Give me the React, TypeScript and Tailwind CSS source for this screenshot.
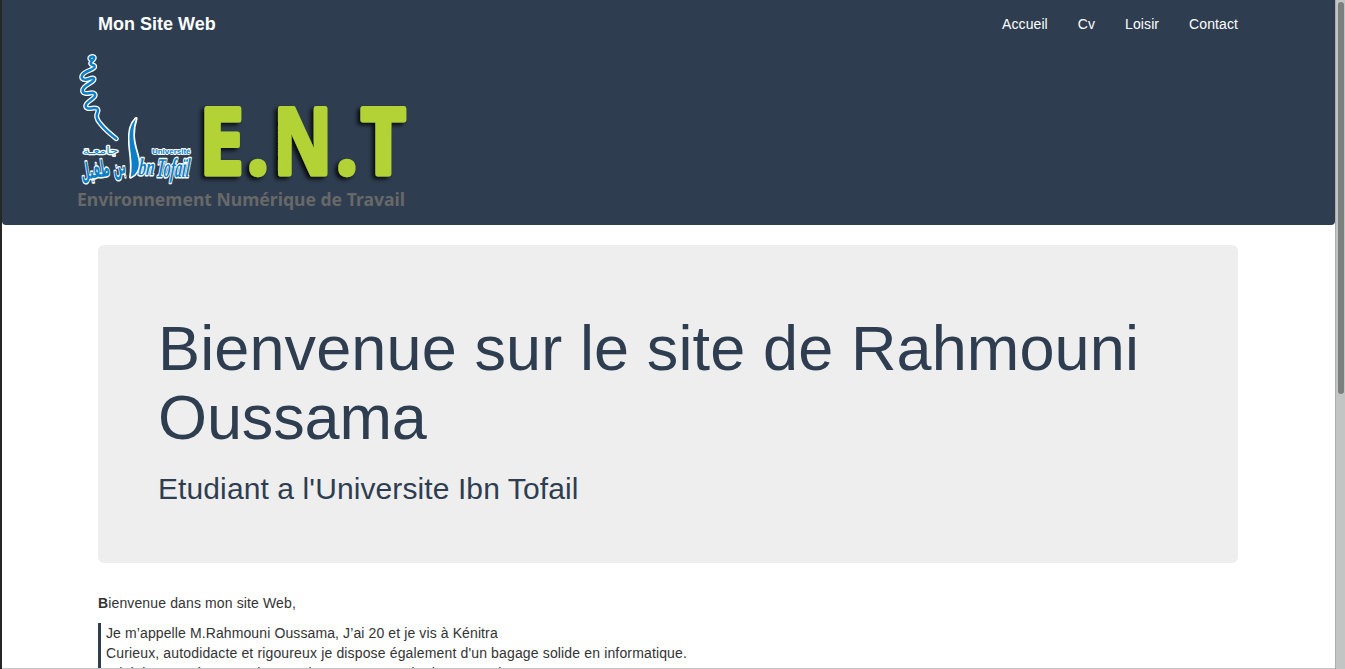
const nav = ['Accueil', 'Cv', 'Loisir', 'Contact'];

const swirl =
  'M62 44 C54 38 66 32 72 36 C77 42 60 50 62 56 C64 62 75 58 74 66 C71 76 44 76 36 92 C31 104 46 106 56 102 C66 98 76 97 71 106 C64 116 42 120 38 134 C36 148 52 146 62 144 C73 142 79 148 73 156 C65 166 48 170 47 183 C48 194 62 190 72 189 C86 188 86 196 82 204 C77 214 82 226 91 236 C106 255 121 267 139 281';
const blade =
  'M198 221 C181 237 177 263 179 292 C180 326 190 355 182 396 C198 389 209 371 206 350 C204 329 190 301 190 271 C190 249 193 235 198 221 Z';

function Calligraphy() {
  return (
    <g fill="none" strokeLinecap="round" strokeLinejoin="round" transform="translate(70 45) scale(.33333)">
      <g filter="url(#glow)">
        <path d={swirl} stroke="#fff" strokeWidth="15" />
        <path d={blade} fill="#fff" stroke="#fff" strokeWidth="10" />
      </g>
      <path d={swirl} stroke="#0b7fc7" strokeWidth="7.5" />
      <path d={blade} fill="#0b7fc7" />
    </g>
  );
}

function Logo() {
  return (
    <svg className="block h-[170px] w-[350px]" viewBox="70 45 350 170" role="img" aria-label="ENT Université Ibn Tofail">
      <defs>
        <filter id="glow" x="-20%" y="-20%" width="140%" height="140%">
          <feGaussianBlur stdDeviation="1.2" />
        </filter>
        <filter id="shade" x="-20%" y="-20%" width="140%" height="140%">
          <feDropShadow dx="-3" dy="2.5" stdDeviation="2" floodColor="#000" floodOpacity="0.85" />
        </filter>
      </defs>
      <Calligraphy />
      <g fill="#0b7fc7" stroke="#fff" strokeWidth="3" strokeLinejoin="round" paintOrder="stroke">
        <g fontFamily="'DejaVu Sans', sans-serif">
          <text x="83" y="154" fontSize="10" strokeWidth="2.4" textLength="35" lengthAdjust="spacingAndGlyphs">جامعـة</text>
          <text transform="translate(82 180) rotate(-9)" fontSize="23" fontWeight="700" textLength="45" lengthAdjust="spacingAndGlyphs">بن طفيل</text>
        </g>
        <g fontFamily="'Liberation Serif', serif" fontStyle="italic" fontWeight="700">
          <text transform="translate(138 175) skewX(-6)" fontSize="24" textLength="16" lengthAdjust="spacingAndGlyphs">bn</text>
          <text transform="translate(156 177) skewX(-6)" fontSize="27" textLength="33" lengthAdjust="spacingAndGlyphs">Tofaïl</text>
        </g>
        <text x="152" y="153.5" fontFamily="'Liberation Sans', sans-serif" fontWeight="700" fontSize="8" strokeWidth="1.8" textLength="38.5" lengthAdjust="spacingAndGlyphs">Université</text>
      </g>
      <g filter="url(#shade)" fill="#b2d235" stroke="#b2d235" strokeWidth="5" strokeLinejoin="round" fontFamily="'Open Sans', sans-serif" fontWeight="700" fontSize="91">
        <text transform="translate(199.5 173.5) scale(.87 1)">E</text>
        <text transform="translate(247 174) scale(.84 .93)">.</text>
        <text transform="translate(273.5 173.5) scale(.79 1)">N</text>
        <text transform="translate(336 174) scale(.84 .93)">.</text>
        <text transform="translate(361 173.5) scale(.85 1)">T</text>
      </g>
      <text x="77" y="206" fill="#686868" fontFamily="'Noto Sans', sans-serif" fontWeight="700" fontSize="18" textLength="328" lengthAdjust="spacingAndGlyphs">
        Environnement Numérique de Travail
      </text>
    </svg>
  );
}

export default function App() {
  return (
    <div className="flex h-[669px] w-[1345px] overflow-hidden bg-white font-['Liberation_Sans',Arial,sans-serif] text-sm leading-5 text-[#333]">
      <div className="w-0.5 shrink-0 bg-[#262626]" />
      <div className="flex h-full w-[1333px] shrink-0 flex-col overflow-hidden border-b border-[#c3c3c3]">
        <header className="h-[225px] shrink-0 rounded-b bg-[#2e3e50] text-white">
          <div className="flex h-[45px] items-start justify-between pl-24 pr-[97px] pt-3.5">
            <a className="text-lg font-bold leading-5">Mon Site Web</a>
            <nav className="flex gap-[30px] tracking-[0.09px]">
              {nav.map((item) => (
                <a key={item}>{item}</a>
              ))}
            </nav>
          </div>
          <div className="pl-[68px]">
            <Logo />
          </div>
        </header>
        <main className="ml-24 w-[1140px] shrink-0 pt-5">
          <section className="h-[318px] rounded-md bg-[#eee] px-[60px] pt-[69px] text-[#2e3e50]">
            <h1 className="text-[63px] leading-[69px] tracking-[0.12px]">
              Bienvenue sur le site de Rahmouni <span className="tracking-[-0.12px]">Oussama</span>
            </h1>
            <h2 className="mt-5 text-[30px] leading-[33px] tracking-[0.1px]">Etudiant a l'Universite Ibn Tofail</h2>
          </section>
          <p className="mt-[30px] tracking-[0.13px]">
            <b>B</b>ienvenue dans mon site Web,
          </p>
          <div className="mt-2.5 border-l-[3px] border-[#2e3e50] pl-[5px]">
            <p className="tracking-[0.11px]">Je m’appelle M.Rahmouni Oussama, J’ai 20 et je vis à Kénitra</p>
            <p className="tracking-[0.148px]">Curieux, autodidacte et rigoureux je dispose également d'un bagage solide en informatique.</p>
            <p className="tracking-[0.2px]">N'hésitez pas à parcourir mon site pour en savoir plus sur moi.</p>
          </div>
        </main>
      </div>
      <div className="w-2.5 shrink-0 border-l border-[#a9adac] bg-[#c3c5c4] pl-0.5 pt-0.5">
        <div className="h-[392px] w-1.5 rounded-full bg-[#7b807f]" />
      </div>
    </div>
  );
}
